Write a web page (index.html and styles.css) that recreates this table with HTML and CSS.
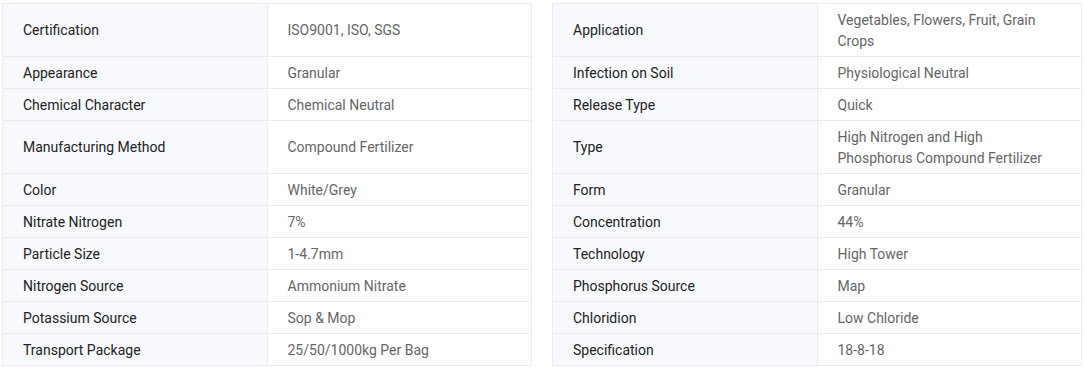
FILE: index.html
```html
<!DOCTYPE html>
<html lang="en">
<head>
  <meta charset="UTF-8" />
  <meta name="viewport" content="width=device-width, initial-scale=1.0" />
  <title>Product Specifications</title>
  <link rel="stylesheet" href="styles.css">
</head>
<body>
  <main class="specs">
    <table class="spec-table">
      <tr class="tall"><td class="label mid">Certification</td><td class="value mid">ISO9001, ISO, SGS</td></tr>
      <tr><td class="label">Appearance</td><td class="value">Granular</td></tr>
      <tr><td class="label">Chemical Character</td><td class="value">Chemical Neutral</td></tr>
      <tr class="tall"><td class="label mid">Manufacturing Method</td><td class="value mid">Compound Fertilizer</td></tr>
      <tr><td class="label">Color</td><td class="value">White/Grey</td></tr>
      <tr><td class="label">Nitrate Nitrogen</td><td class="value">7%</td></tr>
      <tr><td class="label">Particle Size</td><td class="value">1-4.7mm</td></tr>
      <tr><td class="label">Nitrogen Source</td><td class="value">Ammonium Nitrate</td></tr>
      <tr><td class="label">Potassium Source</td><td class="value">Sop &amp; Mop</td></tr>
      <tr><td class="label">Transport Package</td><td class="value">25/50/1000kg Per Bag</td></tr>
    </table>

    <table class="spec-table">
      <tr><td class="label mid">Application</td><td class="value">Vegetables, Flowers, Fruit, Grain Crops</td></tr>
      <tr><td class="label">Infection on Soil</td><td class="value">Physiological Neutral</td></tr>
      <tr><td class="label">Release Type</td><td class="value">Quick</td></tr>
      <tr><td class="label mid">Type</td><td class="value">High Nitrogen and High Phosphorus Compound Fertilizer</td></tr>
      <tr><td class="label">Form</td><td class="value">Granular</td></tr>
      <tr><td class="label">Concentration</td><td class="value">44%</td></tr>
      <tr><td class="label">Technology</td><td class="value">High Tower</td></tr>
      <tr><td class="label">Phosphorus Source</td><td class="value">Map</td></tr>
      <tr><td class="label">Chloridion</td><td class="value">Low Chloride</td></tr>
      <tr><td class="label">Specification</td><td class="value">18-8-18</td></tr>
    </table>
  </main>
</body>
</html>
```

FILE: styles.css
```css
* {
  box-sizing: border-box;
}
body {
  margin: 0;
  font-family: Roboto, 'Liberation Sans', sans-serif;
  background: #ffffff;
}
.specs {
  display: flex;
  align-items: flex-start;
  gap: 20px;
  padding: 3px 4px 0 2px;
}
.spec-table {
  flex: 1;
  border-collapse: collapse;
  font-size: 14px;
  line-height: 21px;
}
.spec-table td {
  border: 1px solid #e9edf3;
  padding: 6px 20px 4px;
  vertical-align: middle;
}
.spec-table td.mid {
  padding: 5px 20px;
}
.spec-table .tall td {
  height: 53px;
}
.label {
  width: 50%;
  background: #f7f9fc;
  color: #222;
}
.value {
  background: #fff;
  color: #666;
}
```
